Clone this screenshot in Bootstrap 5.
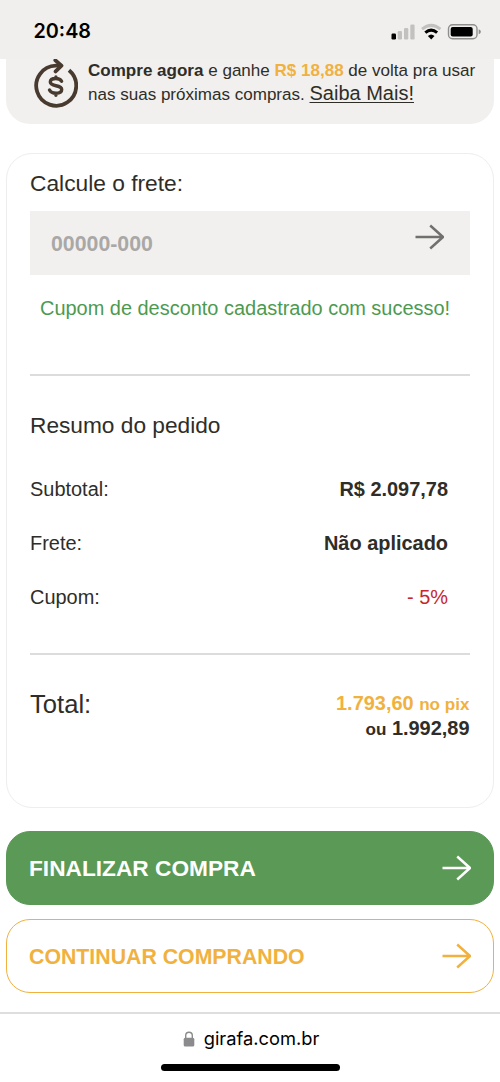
<!DOCTYPE html>
<html lang="pt-BR">
<head>
<meta charset="utf-8">
<meta name="viewport" content="width=device-width, initial-scale=1">
<title>Girafa - Carrinho</title>
<link href="https://cdn.jsdelivr.net/npm/bootstrap@5.3.0/dist/css/bootstrap.min.css" rel="stylesheet">
<style>
  body { font-family: "Liberation Sans", Arial, sans-serif; color: #2f2d28; background: #fff; height: 1082px; overflow: hidden; }
  .status-bar { height: 59px; background: #f0efee; padding: 4px 18px 0 33.5px; font-family: Inter, sans-serif; }
  .clock { font-size: 19.8px; font-weight: 600; color: #000; }
  .page { padding: 0 6.3px 0 6px; }
  .cashback { height: 65px; background: #f1f0ee; border-radius: 0 0 24px 24px; padding-left: 27px; }
  .cashback p { font-size: 17.05px; line-height: 24px; margin-left: 10px; white-space: nowrap; }
  .cashback a { font-size: 20px; line-height: 20px; color: inherit; text-decoration-thickness: 1px; text-underline-offset: 2px; }
  .gold { color: #f1b13f; }
  .order { margin-top: 29px; height: 654.5px; border: 1px solid #eeeeee; border-radius: 26px; padding: 4px 23.2px 0 23px; }
  .order-title { font-size: 22.75px; height: 53px; padding-bottom: 2px; }
  .cep { height: 64px; background: #f1f0ee; padding: 0 25.5px 0 21px; }
  .cep input { font-size: 21.3px; font-weight: 700; padding: 3px 0 0; background: transparent; border: 0; }
  .cep input::placeholder { color: #a9a8a7; opacity: 1; }
  .cep svg { margin-top: -12px; color: #72706e; }
  .notice { height: 67px; font-size: 19.95px; color: #4c9a50; padding-left: 10px; white-space: nowrap; }
  .rule { height: 1.5px; background: #dcdcdc; }
  .rule-shipping { margin-top: 32px; }
  .rule-total { margin-top: 29px; }
  .summary-title { font-size: 22.7px; height: 73.8px; margin-top: 13px; }
  .line-item { height: 54px; font-size: 19.95px; padding-top: 1.5px; padding-right: 21.5px; }
  .discount { color: #c5282c; }
  .total { padding-top: 36px; line-height: 25px; font-size: 19.95px; }
  .total-label { font-size: 25.6px; line-height: 26px; }
  .unit { font-size: 17.1px; line-height: 1; }
  .action { height: 74px; border-radius: 24px; padding: 0 21.5px 0 22px; font-weight: 700; border: 1.5px solid; }
  .action span { padding-top: 2px; }
  .action-finish { background: #5a9956; border-color: #5a9956; color: #fff; font-size: 22.7px; margin-top: 23px; }
  .action-continue { border-color: #f1b13f; color: #f1b13f; font-size: 21.3px; margin-top: 14.5px; }
  .action-continue span { padding-top: 3.5px; }
  .browser-bar { margin-top: 19px; border-top: 2px solid #dedede; font-family: Inter, sans-serif; font-size: 18.3px; color: #000; }
  .address { height: 49.5px; gap: 9px; padding-left: 2px; }
  .home-indicator { width: 179px; height: 7px; border-radius: 4px; background: #000; }
</style>
</head>
<body>
<svg class="d-none">
  <symbol id="arrow" viewBox="0 0 29 26"><path d="M.5 13H28M15.200 1.500L28 13L15.200 24.500" fill="none" stroke="currentColor" stroke-width="2.500" stroke-linejoin="round"/></symbol>
</svg>
<header class="status-bar d-flex align-items-center justify-content-between">
  <span class="clock">20:48</span>
  <svg width="91" height="18" viewBox="0 0 91 18">
    <rect x="0.500" y="10.500" width="4.500" height="6" rx="1.200"/>
    <g fill="#c2c1c0"><rect x="6.700" y="8" width="4.300" height="8.500" rx="1.200"/><rect x="13" y="5" width="4.300" height="11.500" rx="1.200"/><rect x="19.300" y="1.500" width="4.300" height="15" rx="1.200"/></g>
    <g fill="none" stroke-width="3"><path d="M31 6.200Q40.200-1.500 49.400 6.200" stroke="#c2c1c0"/><path d="M34.300 9.700Q40.200 4.600 46.100 9.700" stroke="#000"/></g>
    <path d="M36.900 13Q40.200 10 43.500 13L40.200 16.500Z"/>
    <rect x="57.500" y="1.700" width="28.500" height="14" rx="4" fill="none" stroke="#8f8e8d" stroke-width="1.400"/>
    <rect x="59.700" y="3.900" width="22" height="9.700" rx="2"/>
    <path d="M87.700 6.200Q89.900 7 89.900 8.700T87.700 11.200Z" fill="#8f8e8d"/>
  </svg>
</header>

<main class="page">
  <section class="cashback d-flex align-items-start">
    <svg width="45" height="50" viewBox="0 0 45 50" fill="none" stroke="#483a2e" stroke-width="3.800" stroke-linecap="round" stroke-linejoin="round">
      <path d="M28 6.700H22.800A20 20 0 1 0 36 11.300" stroke-linecap="butt"/>
      <path d="M22.300 1.300L28.500 6.600L22.600 12.400"/>
      <path d="M28.600 22.300C27.500 20.300 25.400 19.500 22.800 19.500C19.700 19.500 17.300 20.800 17.300 23.100C17.300 28.200 28.700 25.300 28.700 30.500C28.700 32.900 26.200 34.200 23 34.200C20 34.200 17.600 33.200 16.500 31M22.900 18V18.900M22.900 35V36.300" stroke-width="3.400"/>
    </svg>
    <p class="mb-0"><b>Compre agora</b> e ganhe <b class="gold">R$ 18,88</b> de volta pra usar<br>nas suas próximas compras. <a href="#">Saiba Mais!</a></p>
  </section>

  <section class="order">
    <label for="cep" class="order-title d-flex align-items-center">Calcule o frete:</label>
    <div class="cep d-flex align-items-center justify-content-between">
      <input id="cep" type="text" placeholder="00000-000">
      <svg width="29" height="26"><use href="#arrow"/></svg>
    </div>
    <div class="notice d-flex align-items-center">Cupom de desconto cadastrado com sucesso!</div>
    <div class="rule rule-shipping"></div>
    <h2 class="summary-title d-flex align-items-center mb-0 fw-normal">Resumo do pedido</h2>
    <div class="line-item d-flex align-items-center justify-content-between"><span>Subtotal:</span><b>R$ 2.097,78</b></div>
    <div class="line-item d-flex align-items-center justify-content-between"><span>Frete:</span><b>Não aplicado</b></div>
    <div class="line-item d-flex align-items-center justify-content-between"><span>Cupom:</span><span class="discount">- 5%</span></div>
    <div class="rule rule-total"></div>
    <div class="total d-flex justify-content-between align-items-start">
      <span class="total-label">Total:</span>
      <div class="text-end fw-bold"><div class="gold">1.793,60 <span class="unit">no pix</span></div><div><span class="unit">ou</span> 1.992,89</div></div>
    </div>
  </section>

  <a href="#" class="action action-finish d-flex align-items-center justify-content-between text-decoration-none"><span>FINALIZAR COMPRA</span> <svg width="29" height="26"><use href="#arrow"/></svg></a>
  <a href="#" class="action action-continue d-flex align-items-center justify-content-between text-decoration-none"><span>CONTINUAR COMPRANDO</span> <svg width="29" height="26"><use href="#arrow"/></svg></a>
</main>

<footer class="browser-bar d-flex flex-column align-items-center">
  <div class="address d-flex align-items-center">
    <svg width="12" height="16" viewBox="0 0 12 16"><path d="M2.700 8V4.500a3.300 3.300 0 0 1 6.600 0V8" fill="none" stroke="#8b8b8d" stroke-width="1.400"/><rect x=".7" y="6.700" width="10.600" height="8.800" rx="1.500" fill="#8b8b8d"/></svg>
    <span>girafa.com.br</span>
  </div>
  <div class="home-indicator"></div>
</footer>
<script src="https://cdn.jsdelivr.net/npm/bootstrap@5.3.0/dist/js/bootstrap.bundle.min.js"></script>
</body>
</html>
